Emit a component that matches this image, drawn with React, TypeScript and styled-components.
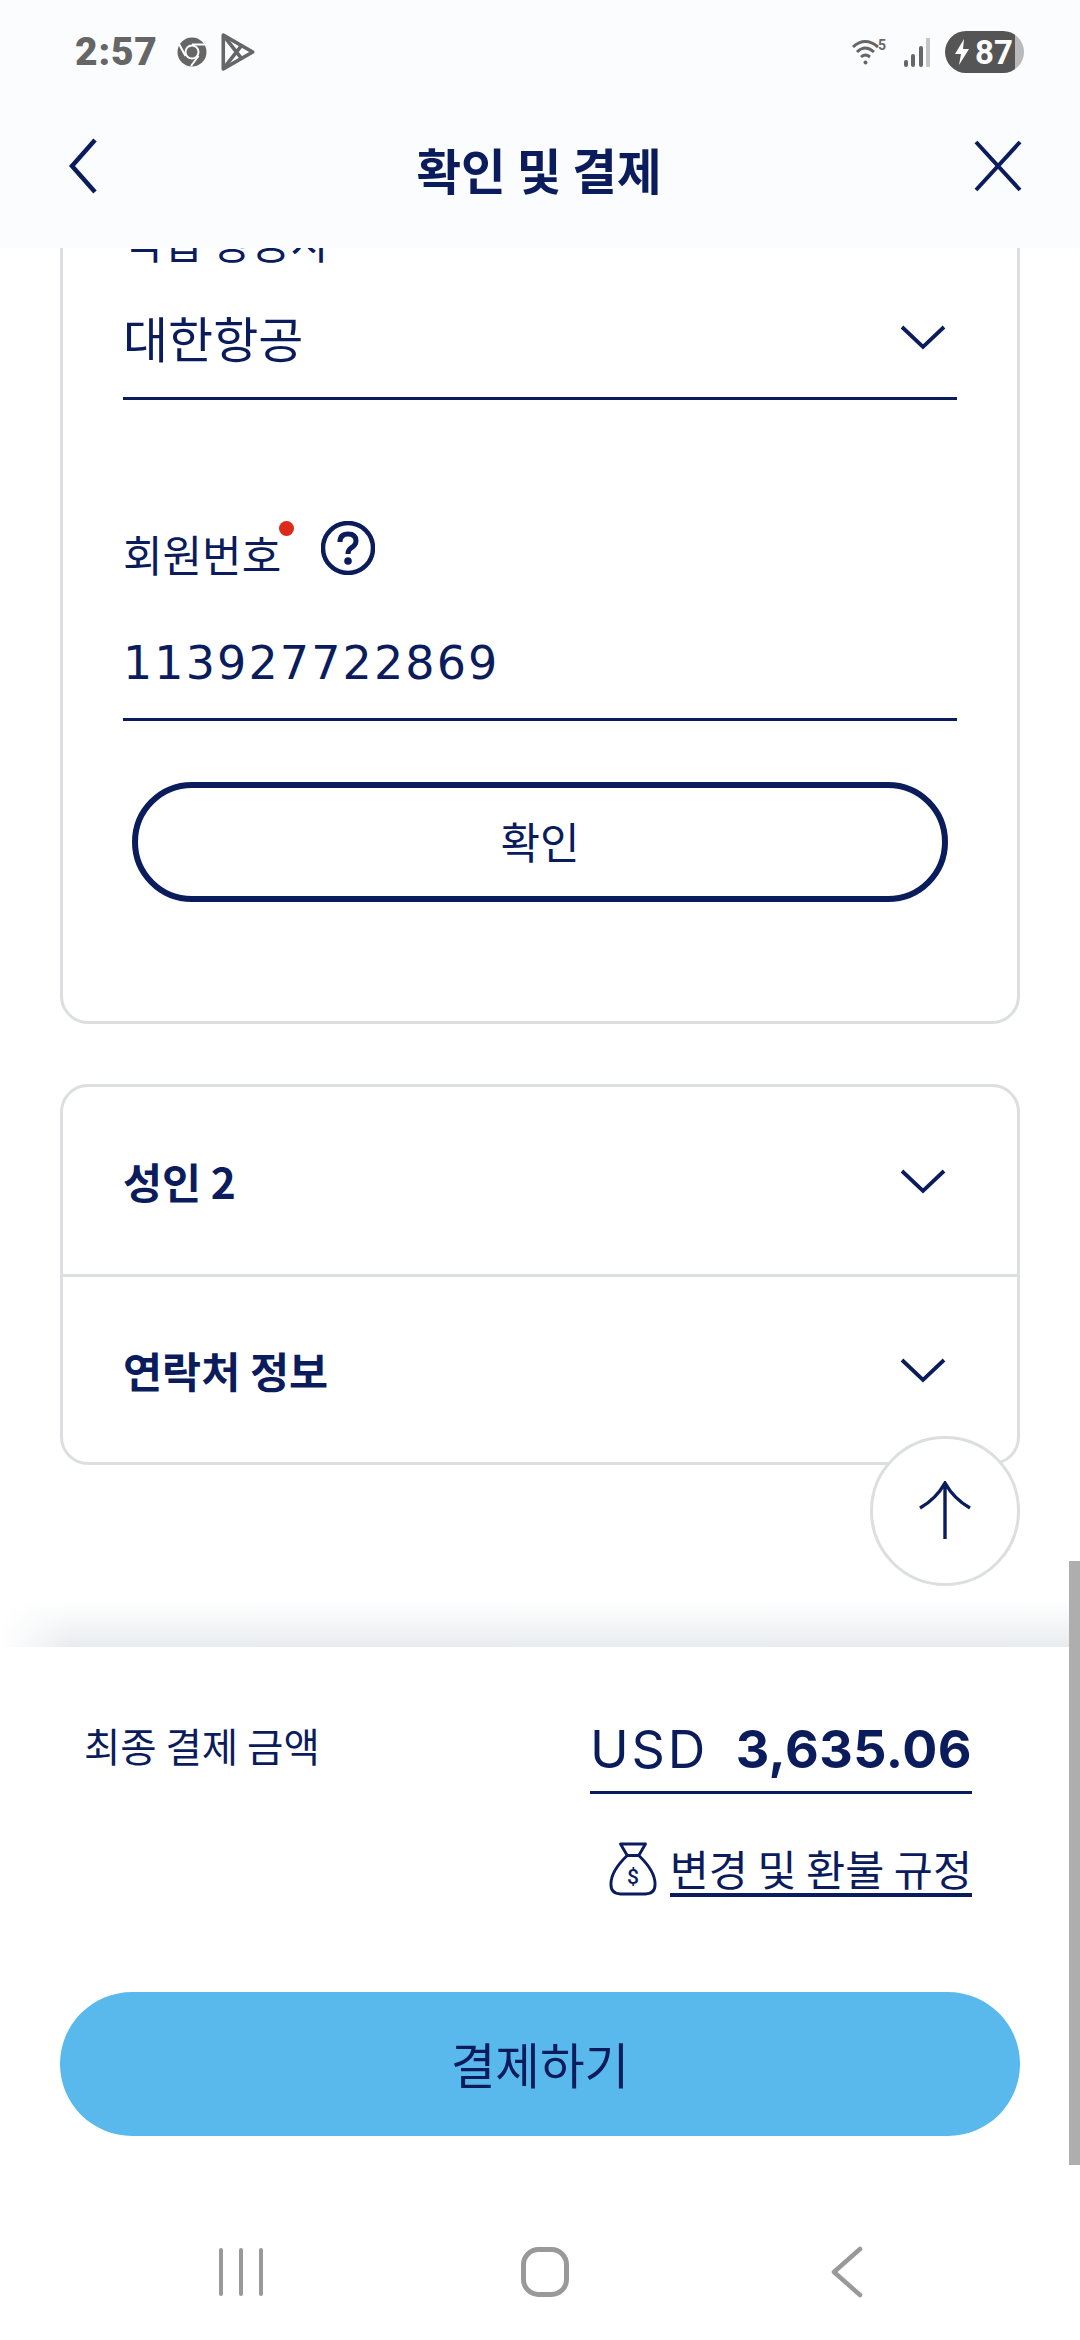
import React from "react";
import styled, { createGlobalStyle } from "styled-components";

const navy = "#0b1c5c";
const line = "#dcdee0";
const kr = '"Noto Sans CJK KR", "Noto Sans", sans-serif';
const latin = '"Inter", "Noto Sans CJK KR", sans-serif';

const GlobalStyle = createGlobalStyle`
  html, body { margin: 0; padding: 0; background: #fff; }
  * { box-sizing: border-box; }
  body { font-family: ${kr}; color: ${navy}; }
`;

const Screen = styled.div`
  position: relative;
  width: 1080px;
  height: 2340px;
  overflow: hidden;
  display: flex;
  flex-direction: column;
  background: #fff;
`;

const Top = styled.header`
  height: 248px;
  flex: none;
  background: #fbfcfe;
  position: relative;
  z-index: 2;
`;

const StatusBar = styled.div`
  height: 104px;
  padding: 0 56px 0 75px;
  display: flex;
  align-items: center;
  justify-content: space-between;
`;

const StatusGroup = styled.div`
  display: flex;
  align-items: center;
  gap: ${(p: { $gap: number }) => p.$gap}px;
`;

const Clock = styled.span`
  font-family: "Roboto", sans-serif;
  font-weight: 900;
  font-size: 39px;
  letter-spacing: 0.8px;
  color: #666;
  margin-right: 6px;
`;

const Battery = styled.div`
  position: relative;
  width: 79px;
  height: 42px;
  border-radius: 21px;
  background: linear-gradient(to right, #555 0 88%, #b9b9b9 88% 100%);
  color: #fff;
  display: flex;
  align-items: center;
  gap: 5px;
  padding-left: 9px;
  font-family: "Roboto", sans-serif;
  font-weight: 700;
  font-size: 33px;
`;

const NavRow = styled.div`
  height: 130px;
  padding: 0 58px 0 68px;
  display: flex;
  align-items: center;
  justify-content: space-between;
  & > svg {
    margin-top: -6px;
  }
`;

const Title = styled.h1`
  margin: 0 0 0 6px;
  font-size: 48.500px;
  font-weight: 700;
  color: ${navy};
`;

const Scroller = styled.main`
  flex: 1;
  min-height: 0;
  overflow: hidden;
  padding: 0 60px;
`;

const Card = styled.section`
  border: 3px solid ${line};
  border-radius: 28px;
  background: #fff;
`;

const FormCard = styled(Card)`
  margin-top: -80px;
  height: 856px;
  padding: 0 60px 0 60px;
  margin-bottom: 60px;
`;

const ClippedLabel = styled.div`
  font-size: 43px;
  line-height: 56px;
  height: 56px;
  margin-top: 41px;
`;

const SelectRow = styled.div`
  height: 112px;
  margin-top: 20px;
  border-bottom: 3px solid ${navy};
  display: flex;
  align-items: center;
  justify-content: space-between;
  font-size: 49px;
  padding: 0 0 12px;
`;

const LabelRow = styled.div`
  margin-top: 125px;
  height: 56px;
  display: flex;
  align-items: center;
  font-size: 43px;
`;

const RequiredDot = styled.span`
  width: 15px;
  height: 15px;
  border-radius: 50%;
  background: #dd2a1b;
  margin: -50px 0 0 -2px;
  align-self: center;
`;

const HelpIcon = styled.svg`
  margin: -10px 0 0 27px;
`;

const NumberValue = styled.div`
  margin-top: 20px;
  height: 120px;
  padding-top: 35px;
  border-bottom: 3px solid ${navy};
  font-family: ${'"DejaVu Sans", sans-serif'};
  font-size: 46px;
  letter-spacing: 2.1px;
`;

const OutlineButton = styled.button`
  display: block;
  width: 816px;
  height: 120px;
  margin: 61px 0 0 9px;
  border: 6px solid ${navy};
  border-radius: 60px;
  background: #fff;
  color: ${navy};
  font-family: ${kr};
  font-size: 43px;
  padding-bottom: 6px;
`;

const AccordionRow = styled.div`
  height: ${(p: { $h: number }) => p.$h}px;
  display: flex;
  align-items: center;
  justify-content: space-between;
  padding: 0 60px;
  font-size: 42.500px;
  font-weight: 700;
  & + & {
    border-top: 3px solid ${line};
  }
`;

const ChevronIcon = styled.svg`
  margin-right: 11px;
`;

const UpButton = styled.button`
  position: absolute;
  left: 870px;
  top: 1436px;
  width: 150px;
  height: 150px;
  border-radius: 50%;
  border: 3px solid ${line};
  background: #fff;
  display: flex;
  align-items: center;
  justify-content: center;
  padding: 0;
`;

const Footer = styled.footer`
  height: 693px;
  flex: none;
  position: relative;
  background: #fff;
  display: flex;
  flex-direction: column;
  padding: 0 60px;
  &::before {
    content: "";
    position: absolute;
    left: 0;
    right: 0;
    top: -46px;
    height: 46px;
    background: linear-gradient(to bottom, rgba(232, 236, 240, 0), #e9ecef);
    mask-image: linear-gradient(to right, transparent 0, #000 70px);
  }
`;

const PriceRow = styled.div`
  display: flex;
  justify-content: space-between;
  align-items: flex-start;
  padding: 69px 48px 0 24px;
  height: 147px;
`;

const PriceLabel = styled.div`
  font-size: 39.500px;
  line-height: 58px;
`;

const Price = styled.div`
  width: 382px;
  height: 78px;
  border-bottom: 3px solid ${navy};
  display: flex;
  justify-content: space-between;
  align-items: center;
  font-family: ${latin};
  font-size: 52px;
  padding-bottom: 8px;
`;

const PriceCurrency = styled.span`
  letter-spacing: 2.800px;
`;

const PriceAmount = styled.strong`
  font-weight: 700;
  letter-spacing: 0.5px;
`;

const PolicyRow = styled.div`
  display: flex;
  justify-content: flex-end;
  align-items: flex-end;
  gap: 13px;
  padding-right: 48px;
  margin-top: 45px;
`;

const PolicyLink = styled.a`
  font-size: 42.500px;
  line-height: 50px;
  padding-top: 4px;
  color: ${navy};
  border-bottom: 4px solid ${navy};
`;

const PayButton = styled.button`
  width: 960px;
  height: 144px;
  margin-top: 95px;
  border: 0;
  border-radius: 72px;
  background: #5ab9ec;
  color: ${navy};
  font-family: ${kr};
  font-size: 48.500px;
  padding-bottom: 4px;
`;

const SystemNav = styled.nav`
  display: flex;
  align-items: center;
  height: 60px;
  margin: 106px 0 0 -60px;
  width: 1080px;
`;

const NavSlot = styled.div`
  position: absolute;
  left: ${(p: { $x: number }) => p.$x}px;
  display: flex;
`;

const ScrollThumb = styled.div`
  position: absolute;
  right: 0;
  top: 1561px;
  width: 11px;
  height: 604px;
  background: #aeaeae;
  z-index: 3;
`;

const Chevron = () => (
  <ChevronIcon width="46" height="26" viewBox="0 0 46 26" fill="none">
    <path d="M2 3 L23 23 L44 3" stroke={navy} strokeWidth="3.8" />
  </ChevronIcon>
);

export default function App() {
  return (
    <Screen>
      <GlobalStyle />
      <Top>
        <StatusBar>
          <StatusGroup $gap={13}>
            <Clock>2:57</Clock>
            <svg width="30" height="30" viewBox="0 0 30 30">
              <circle cx="15" cy="15" r="14.5" fill="#666" />
              <circle cx="15" cy="15" r="7.5" fill="#fff" />
              <circle cx="15" cy="15" r="5.5" fill="#666" />
              <path d="M15 7.5 H29 M8.5 19 L2 7 M21.5 19 L14 29" stroke="#fff" strokeWidth="2" />
            </svg>
            <svg width="36" height="40" viewBox="0 0 34 38" fill="none" stroke="#666" strokeWidth="3.4" strokeLinejoin="round">
              <path d="M3 3 L31 19 L3 35 Z" />
              <path d="M3 3 L21 26 M3 35 L21 12" />
            </svg>
          </StatusGroup>
          <StatusGroup $gap={14}>
            <svg width="38" height="30" viewBox="0 0 38 30" fill="none" stroke="#666" strokeWidth="3">
              <path d="M2 10 Q14 -1 27 10" />
              <path d="M6 15 Q14 7 23 15" />
              <path d="M10 20 Q14 16 19 20" />
              <circle cx="14.500" cy="25.500" r="2" fill="#666" stroke="none" />
              <text x="27" y="13" fontFamily="Roboto, sans-serif" fontSize="14" fontWeight="700" fill="#666" stroke="none">5</text>
            </svg>
            <svg width="28" height="30" viewBox="0 0 28 30">
              <rect x="1" y="23" width="4" height="7" rx="2" fill="#666" />
              <rect x="8" y="17" width="4" height="13" rx="2" fill="#666" />
              <rect x="16" y="9" width="4" height="21" rx="2" fill="#666" />
              <rect x="23" y="1" width="4" height="29" rx="1" fill="#c4c4c4" />
            </svg>
            <Battery>
              <svg width="16" height="26" viewBox="0 0 16 26">
                <path d="M10 0 L1 15 H7 L5 26 L15 10 H9 Z" fill="#fff" />
              </svg>
              87
            </Battery>
          </StatusGroup>
        </StatusBar>
        <NavRow>
          <svg width="30" height="56" viewBox="0 0 30 56" fill="none">
            <path d="M27 2 L4 28 L27 54" stroke={navy} strokeWidth="4.500" />
          </svg>
          <Title>확인 및 결제</Title>
          <svg width="48" height="52" viewBox="0 0 48 52" fill="none">
            <path d="M2 2 L46 50 M46 2 L2 50" stroke={navy} strokeWidth="4" />
          </svg>
        </NavRow>
      </Top>

      <Scroller>
        <FormCard>
          <ClippedLabel>적립 항공사</ClippedLabel>
          <SelectRow>
            대한항공
            <Chevron />
          </SelectRow>
          <LabelRow>
            회원번호
            <RequiredDot />
            <HelpIcon width="54" height="54" viewBox="0 0 54 54" fill="none">
              <circle cx="27" cy="27" r="25" stroke={navy} strokeWidth="4.500" />
              <path d="M19 21 Q19 13 27 13 Q35 13 35 20 Q35 24 30 27 Q27 29 27 33" stroke={navy} strokeWidth="5" />
              <circle cx="27" cy="40" r="3.800" fill={navy} />
            </HelpIcon>
          </LabelRow>
          <NumberValue>113927722869</NumberValue>
          <OutlineButton>확인</OutlineButton>
        </FormCard>
        <Card>
          <AccordionRow $h={187}>
            성인 2
            <Chevron />
          </AccordionRow>
          <AccordionRow $h={188}>
            연락처 정보
            <Chevron />
          </AccordionRow>
        </Card>
      </Scroller>

      <UpButton aria-label="top">
        <svg width="54" height="60" viewBox="0 0 54 60" fill="none">
          <path d="M2 27 Q18 18 27 2 Q36 18 52 27 M27 2 V58" stroke={navy} strokeWidth="3.400" />
        </svg>
      </UpButton>

      <Footer>
        <PriceRow>
          <PriceLabel>최종 결제 금액</PriceLabel>
          <Price>
            <PriceCurrency>USD</PriceCurrency>
            <PriceAmount>3,635.06</PriceAmount>
          </Price>
        </PriceRow>
        <PolicyRow>
          <svg width="48" height="56" viewBox="0 0 50 56" fill="none" stroke={navy} strokeWidth="3">
            <path d="M12 2 H38 L31 14 H19 Z" strokeLinejoin="round" />
            <path d="M19 14 Q2 30 2 44 Q2 54 12 54 H38 Q48 54 48 44 Q48 30 31 14" />
            <text x="25" y="44" textAnchor="middle" fontFamily="Roboto, sans-serif" fontSize="22" fontWeight="500" fill={navy} stroke="none">$</text>
          </svg>
          <PolicyLink>변경 및 환불 규정</PolicyLink>
        </PolicyRow>
        <PayButton>결제하기</PayButton>
        <SystemNav>
          <NavSlot $x={218}>
            <svg width="46" height="48" viewBox="0 0 46 48" stroke="#999" strokeWidth="4" strokeLinecap="round">
              <path d="M3 2 V46 M23 2 V46 M43 2 V46" />
            </svg>
          </NavSlot>
          <NavSlot $x={521}>
            <svg width="48" height="50" viewBox="0 0 48 50" fill="none" stroke="#999" strokeWidth="5">
              <rect x="2.500" y="2.500" width="43" height="45" rx="15" />
            </svg>
          </NavSlot>
          <NavSlot $x={830}>
            <svg width="34" height="52" viewBox="0 0 34 52" fill="none" stroke="#999" strokeWidth="4.500" strokeLinecap="round" strokeLinejoin="round">
              <path d="M30 3 L4 26 L30 49" />
            </svg>
          </NavSlot>
        </SystemNav>
      </Footer>
      <ScrollThumb />
    </Screen>
  );
}
